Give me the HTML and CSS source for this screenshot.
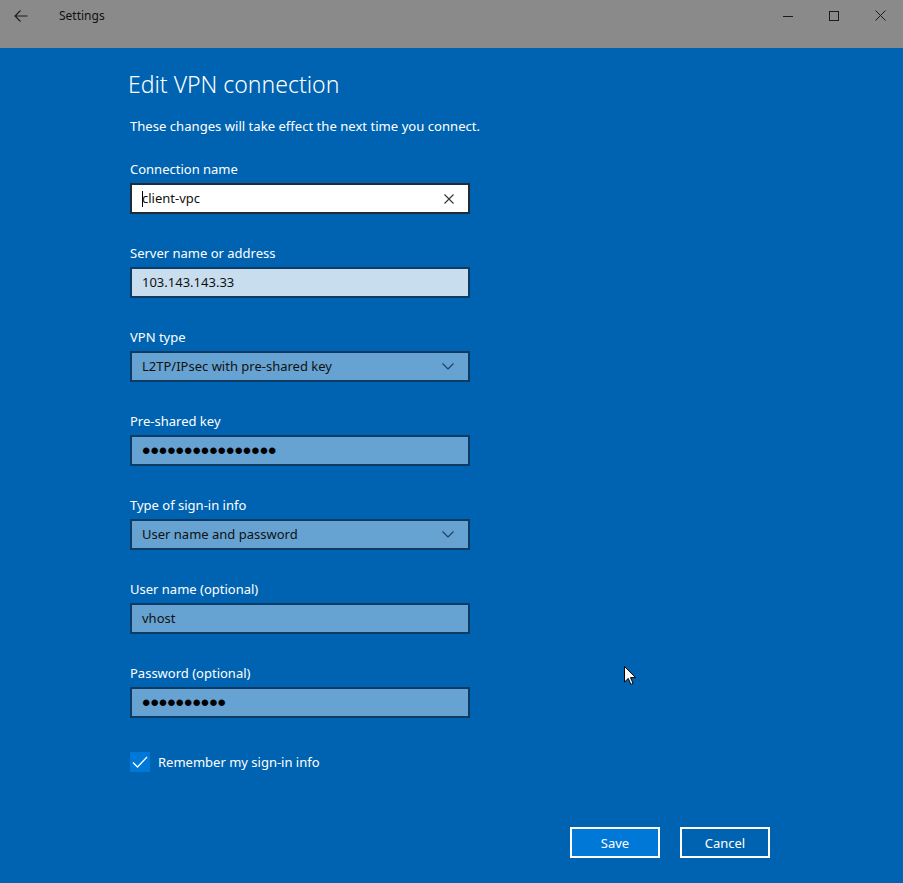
FILE: index.html
```html
<!DOCTYPE html>
<html lang="en">
<head>
    <meta charset="UTF-8">
    <meta name="viewport" content="width=device-width, initial-scale=1.0">
    <title>Settings</title>
    <link rel="stylesheet" href="styles.css">
</head>
<body>

    <div class="titlebar">
        <div class="titlebar-left">
            <span class="back-btn">
                <svg width="14" height="12" viewBox="0 0 14 12"><path d="M13.5 6H1M6.5 0.5L1 6l5.5 5.5" fill="none" stroke="#1b1b1b" stroke-width="1.1"/></svg>
            </span>
            <span class="app-name">Settings</span>
        </div>
        <div class="window-controls">
            <span class="win-btn">
                <svg width="10" height="10" viewBox="0 0 10 10"><path d="M0 5.5h10" stroke="#1b1b1b" stroke-width="1"/></svg>
            </span>
            <span class="win-btn">
                <svg width="10" height="10" viewBox="0 0 10 10"><rect x="0.5" y="0.5" width="9" height="9" fill="none" stroke="#1b1b1b" stroke-width="1"/></svg>
            </span>
            <span class="win-btn">
                <svg width="11" height="11" viewBox="0 0 11 11"><path d="M0.5 0.5l10 10M10.5 0.5l-10 10" stroke="#1b1b1b" stroke-width="1"/></svg>
            </span>
        </div>
    </div>

    <div class="dialog">
        <div class="form">
            <h1>Edit VPN connection</h1>
            <p class="note">These changes will take effect the next time you connect.</p>

            <div class="field">
                <label>Connection name</label>
                <div class="box box-focus">
                    <span class="caret"></span>
                    <span class="value">client-vpc</span>
                    <svg class="clear-icon" width="10" height="10" viewBox="0 0 10 10"><path d="M0.5 0.5l9 9M9.5 0.5l-9 9" stroke="#333" stroke-width="1.1"/></svg>
                </div>
            </div>

            <div class="field">
                <label>Server name or address</label>
                <div class="box box-light">
                    <span class="value">103.143.143.33</span>
                </div>
            </div>

            <div class="field">
                <label>VPN type</label>
                <div class="box">
                    <span class="value">L2TP/IPsec with pre-shared key</span>
                    <svg class="chevron" width="12" height="7" viewBox="0 0 12 7"><path d="M0.5 0.5L6 6l5.5-5.5" fill="none" stroke="#1b3f60" stroke-width="1.1"/></svg>
                </div>
            </div>

            <div class="field">
                <label>Pre-shared key</label>
                <div class="box">
                    <span class="dots">&bull;&bull;&bull;&bull;&bull;&bull;&bull;&bull;&bull;&bull;&bull;&bull;&bull;&bull;&bull;&bull;</span>
                </div>
            </div>

            <div class="field">
                <label>Type of sign-in info</label>
                <div class="box">
                    <span class="value">User name and password</span>
                    <svg class="chevron" width="12" height="7" viewBox="0 0 12 7"><path d="M0.5 0.5L6 6l5.5-5.5" fill="none" stroke="#1b3f60" stroke-width="1.1"/></svg>
                </div>
            </div>

            <div class="field">
                <label>User name (optional)</label>
                <div class="box">
                    <span class="value">vhost</span>
                </div>
            </div>

            <div class="field">
                <label>Password (optional)</label>
                <div class="box">
                    <span class="dots">&bull;&bull;&bull;&bull;&bull;&bull;&bull;&bull;&bull;&bull;</span>
                </div>
            </div>

            <div class="check-row">
                <span class="checkbox">
                    <svg width="16" height="12" viewBox="0 0 16 12"><path d="M1 6.5l4.5 4.5L15 1" fill="none" stroke="#fff" stroke-width="1.3"/></svg>
                </span>
                <span>Remember my sign-in info</span>
            </div>

            <div class="buttons">
                <button class="btn btn-primary">Save</button>
                <button class="btn">Cancel</button>
            </div>
        </div>

        <svg class="mouse" width="12" height="19" viewBox="0 0 12 19"><path d="M0.5 0.5v15.5l3.8-3.6 2.6 6 2.2-1-2.6-5.8h5.2z" fill="#fff" stroke="#000" stroke-width="1"/></svg>
    </div>

</body>
</html>
```

FILE: styles.css
```css
body {
    margin: 0;
    font-family: "Segoe UI", "Noto Sans", Arial, sans-serif;
    background-color: #0063b1;
    height: 883px;
    overflow: hidden;
}

.titlebar {
    height: 48px;
    background: #8a8a8a;
    display: flex;
    justify-content: space-between;
    align-items: flex-start;
}

.titlebar-left {
    display: flex;
    align-items: center;
    height: 31px;
}

.back-btn {
    width: 14px;
    padding: 0 18px 0 14px;
    display: flex;
}

.app-name {
    font-size: 12px;
    color: #111;
    margin-left: 13px;
}

.window-controls {
    display: flex;
}

.win-btn {
    width: 46px;
    height: 31px;
    display: flex;
    align-items: center;
    justify-content: center;
}

.dialog {
    position: relative;
    height: 835px;
}

.form {
    width: 640px;
    padding: 20px 0 0 130px;
    color: #fff;
}

h1 {
    font-size: 23px;
    font-weight: 300;
    margin: 0 0 0 -2px;
    line-height: 32px;
}

.note {
    font-size: 13.1px;
    margin: 17px 0 24px;
    line-height: 18px;
}

.field {
    margin-bottom: 29px;
}

label {
    display: block;
    font-size: 13px;
    line-height: 20px;
    margin-bottom: 4px;
}

.box {
    position: relative;
    width: 340px;
    height: 31px;
    box-sizing: border-box;
    border: 2px solid #0c3c66;
    background: #66a3d2;
    display: flex;
    align-items: center;
    padding: 0 10px;
    color: #111;
    font-size: 13px;
}

.box-focus {
    background: #fff;
    border-color: #1f2b36;
}

.box-light {
    background: #c8deef;
}

.value {
    flex: 1;
    margin-top: -1px;
}

.caret {
    position: absolute;
    left: 10px;
    top: 6px;
    width: 1px;
    height: 16px;
    background: #000;
}

.clear-icon {
    margin-right: 4px;
}

.chevron {
    margin-right: 4px;
}

.dots {
    font-family: "Liberation Sans", Arial, sans-serif;
    font-size: 24px;
    line-height: 1;
    color: #000;
    margin-top: 1px;
}

.check-row {
    display: flex;
    align-items: center;
    font-size: 13px;
    margin-top: 34px;
}

.checkbox {
    width: 20px;
    height: 20px;
    background: #0078d7;
    display: flex;
    align-items: center;
    justify-content: center;
    margin-right: 8px;
}

.buttons {
    display: flex;
    justify-content: flex-end;
    gap: 20px;
    margin-top: 55px;
}

.btn {
    width: 90px;
    height: 31px;
    border: 2px solid #fff;
    background: #0063b1;
    color: #fff;
    font-family: "Segoe UI", "Noto Sans", Arial, sans-serif;
    font-size: 13px;
    padding: 0;
}

.btn-primary {
    background: #0078d7;
}

.mouse {
    position: absolute;
    left: 624px;
    top: 618px;
}
```
